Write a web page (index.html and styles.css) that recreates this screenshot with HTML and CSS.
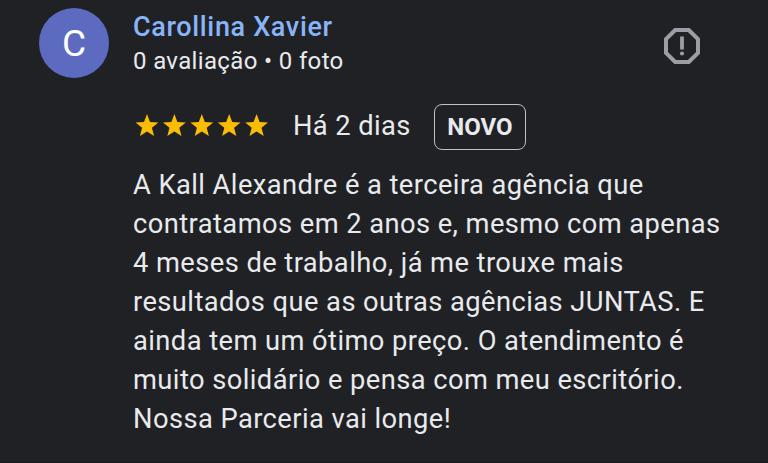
FILE: index.html
```
<!DOCTYPE html>
<html lang="pt-BR">
<head>
	<meta charset="utf-8">
	<title>Avaliação</title>
	<link rel="stylesheet" href="styles.css">
</head>
<body>
	<div class="review">
		<div class="avatar">C</div>
		<div class="content">
			<div class="header">
				<div class="author">
					<div class="name">Carollina Xavier</div>
					<div class="stats">0 avaliação • 0 foto</div>
				</div>
				<svg class="report" width="38" height="38" viewBox="0 0 38 38">
					<path d="M12.2 3h13.6l9.2 9.2v13.6l-9.2 9.2H12.2L3 25.8V12.2z" fill="none" stroke="#9b9ea5" stroke-width="4"/>
					<path d="M17.1 9.5h3.8v13h-3.8z" fill="#9b9ea5"/>
					<circle cx="19" cy="26.5" r="2.1" fill="#9b9ea5"/>
				</svg>
			</div>
			<div class="rating">
				<svg class="stars" width="134" height="24" viewBox="0 0 134 24">
					<defs>
						<path id="star" d="M12 1l3 7.9 8.4.5-6.5 5.4 2.2 8.1-7.1-4.5-7.1 4.5 2.2-8.1L.6 9.4 9 8.9z"/>
					</defs>
					<g fill="#fbbc04">
						<use href="#star"/>
						<use href="#star" x="27.4"/>
						<use href="#star" x="54.8"/>
						<use href="#star" x="82.2"/>
						<use href="#star" x="109.6"/>
					</g>
				</svg>
				<span class="date">Há 2 dias</span>
				<span class="badge">NOVO</span>
			</div>
			<p class="text">
				A Kall Alexandre é a terceira agência que<br>
				contratamos em 2 anos e, mesmo com apenas<br>
				4 meses de trabalho, já me trouxe mais<br>
				resultados que as outras agências JUNTAS. E<br>
				ainda tem um ótimo preço. O atendimento é<br>
				muito solidário e pensa com meu escritório.<br>
				Nossa Parceria vai longe!
			</p>
		</div>
	</div>
</body>
</html>
```
FILE: styles.css
```
body {
	margin: 0;
	background: #202124;
	color: #e8eaed;
	font-family: Roboto, sans-serif;
}
.review {
	box-sizing: border-box;
	display: flex;
	height: 463px;
	border-bottom: 1px solid #1b1719;
	overflow: hidden;
}
.avatar {
	width: 70px;
	height: 70px;
	margin: 8px 24px 0 39px;
	border-radius: 50%;
	background: #5c6bc0;
	color: #fff;
	font-size: 37px;
	line-height: 72px;
	text-align: center;
}
.content {
	width: 610px;
}
.header {
	display: flex;
	justify-content: space-between;
	height: 103px;
}
.name {
	margin-top: 10px;
	color: #8ab4f8;
	font-size: 27px;
	font-weight: 500;
	line-height: 34px;
	letter-spacing: 0.65px;
	white-space: nowrap;
}
.stats {
	font-size: 24px;
	line-height: 34px;
	letter-spacing: 0.35px;
	white-space: nowrap;
}
.report {
	margin: 27px 42px 0 0;
}
.rating {
	display: flex;
	align-items: center;
	height: 48px;
}
.stars {
	margin: -5px 24px 0 2px;
}
.date {
	width: 141px;
	margin-top: -2px;
	font-size: 27.3px;
	letter-spacing: 0.4px;
	white-space: nowrap;
}
.badge {
	box-sizing: border-box;
	width: 92px;
	height: 46px;
	border: 1px solid #bdc1c6;
	border-radius: 8px;
	font-size: 24px;
	font-weight: 700;
	line-height: 45px;
	text-align: center;
}
.text {
	margin: 15px 0 0;
	font-size: 27.3px;
	line-height: 39px;
	letter-spacing: 0.43px;
	white-space: nowrap;
}
```
